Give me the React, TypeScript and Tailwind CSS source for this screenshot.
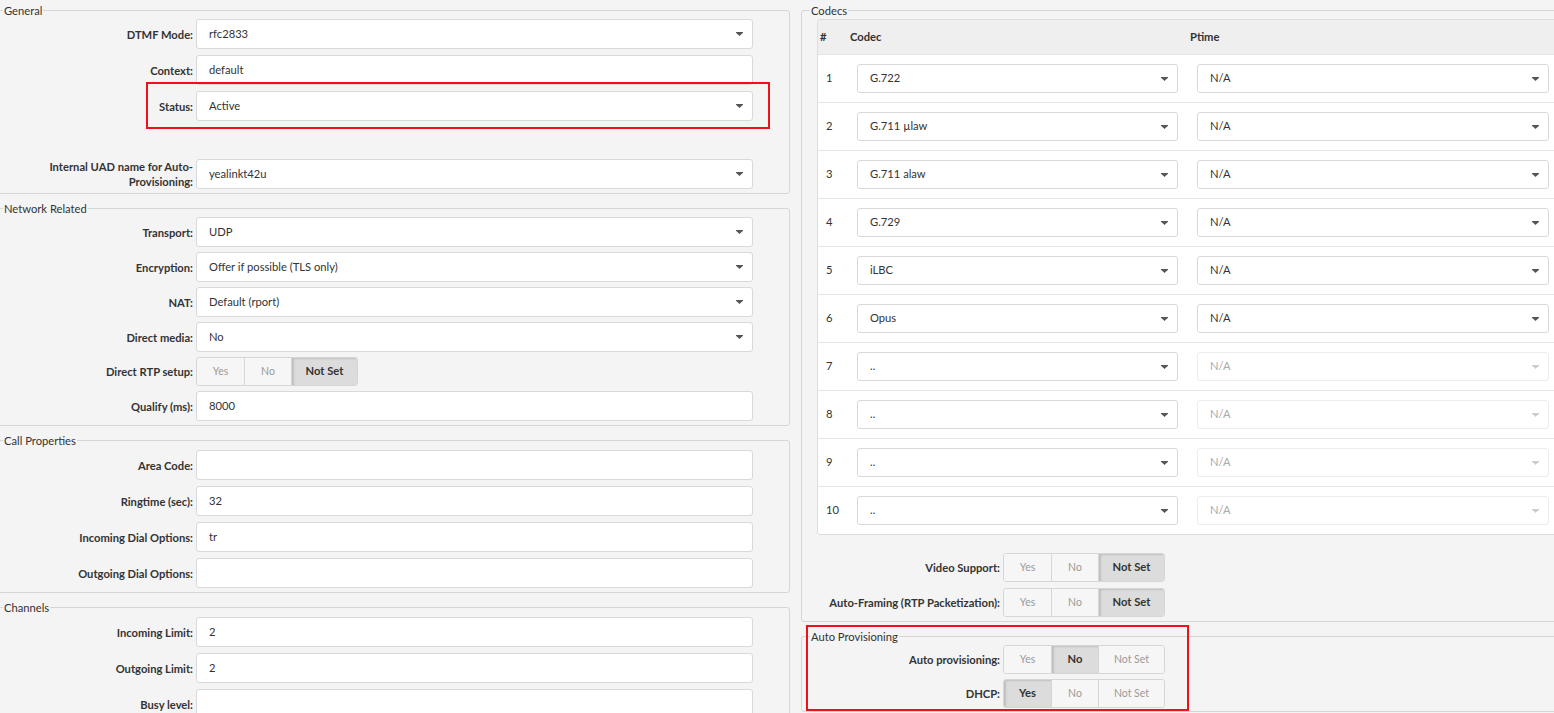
import type { ReactNode } from "react";

const codecs = ["G.722", "G.711 µlaw", "G.711 alaw", "G.729", "iLBC", "Opus", "..", "..", "..", ".."];

function Caret({ light }: { light?: boolean }) {
  return (
    <svg width="7" height="4" viewBox="0 0 7 4" className="shrink-0">
      <path d="M0 0h7v0.8L3.5 4 0 0.8z" fill={light ? "#cccccc" : "#555"} />
    </svg>
  );
}

function Input({ value = "", select, disabled, h = "h-[30px]" }: { value?: string; select?: boolean; disabled?: boolean; h?: string }) {
  return (
    <div
      className={`${h} flex items-center justify-between rounded-[3px] border bg-white pl-[12px] pr-[9px] ${
        disabled ? "border-[#ececec] text-[#aaa]" : "border-[#d9d9d9] text-[#333]"
      }`}
    >
      <span>{value}</span>
      {select && <Caret light={disabled} />}
    </div>
  );
}

function Toggle({ selected }: { selected: number }) {
  const opts = [
    { t: "Yes", w: "w-[47px]" },
    { t: "No", w: "w-[47px]" },
    { t: "Not Set", w: "w-[66px]" },
  ];
  return (
    <div className="flex h-[29px] w-fit overflow-hidden rounded-[3px] border border-[#d6d6d6]">
      {opts.map((o, i) => (
        <div
          key={o.t}
          className={`${o.w} flex items-center justify-center ${i > 0 ? "border-l border-[#d6d6d6]" : ""} ${
            i === selected
              ? "bg-[#dcdcdc] text-[11.2px] font-bold text-[#333] shadow-[inset_2px_1px_2px_rgba(0,0,0,0.13)]"
              : "bg-[#f6f6f6] text-[10.5px] text-[#9a9a9a]"
          }`}
        >
          {o.t}
        </div>
      ))}
    </div>
  );
}

function Row({ label, children, wide = true }: { label: string; children: ReactNode; wide?: boolean }) {
  return (
    <div className="flex items-center">
      <label className="w-[201px] shrink-0 pl-[8px] pr-[3px] text-right font-bold leading-[15px] text-[#333]">{label}</label>
      <div className={wide ? "w-[557px]" : ""}>{children}</div>
    </div>
  );
}

function Fieldset({ legend, children }: { legend: string; children: ReactNode }) {
  return (
    <fieldset className="rounded-[3px] border border-[#d6d6d6]">
      <legend className="ml-[8px] px-[1px] leading-[15px] text-[#333]">{legend}</legend>
      {children}
    </fieldset>
  );
}

export default function App() {
  return (
    <div className="h-[713px] w-full overflow-hidden bg-[#f4f4f4] font-['Lato','Noto_Sans',sans-serif] text-[11.2px] text-[#333]">
      <div className="flex items-start">
        {/* left column */}
        <div className="-ml-[6px] flex w-[796px] shrink-0 flex-col gap-[7px] pt-[3px]">
          <Fieldset legend="General">
            <div className="flex flex-col gap-[6px] pb-[4px] pt-[1px]">
              <Row label="DTMF Mode:"><Input value="rfc2833" select /></Row>
              <Row label="Context:"><Input value="default" /></Row>
              <div className="relative">
                <Row label="Status:"><Input value="Active" select /></Row>
                <div className="pointer-events-none absolute -bottom-[8px] -top-[9px] left-[151px] right-[19px] border-2 border-[#f0101c]" />
              </div>
              <div className="h-[26px]" />
              <Row label="Internal UAD name for Auto-Provisioning:"><Input value="yealinkt42u" select /></Row>
            </div>
          </Fieldset>

          <Fieldset legend="Network Related">
            <div className="flex flex-col gap-[5px] pb-[4px] pt-[1px]">
              <Row label="Transport:"><Input value="UDP" select /></Row>
              <Row label="Encryption:"><Input value="Offer if possible (TLS only)" select /></Row>
              <Row label="NAT:"><Input value="Default (rport)" select /></Row>
              <Row label="Direct media:"><Input value="No" select /></Row>
              <Row label="Direct RTP setup:"><Toggle selected={2} /></Row>
              <Row label="Qualify (ms):"><Input value="8000" /></Row>
            </div>
          </Fieldset>

          <Fieldset legend="Call Properties">
            <div className="flex flex-col gap-[6px] pb-[4px] pt-[2px]">
              <Row label="Area Code:"><Input /></Row>
              <Row label="Ringtime (sec):"><Input value="32" /></Row>
              <Row label="Incoming Dial Options:"><Input value="tr" /></Row>
              <Row label="Outgoing Dial Options:"><Input /></Row>
            </div>
          </Fieldset>

          <Fieldset legend="Channels">
            <div className="flex flex-col gap-[6px] pb-[4px] pt-[2px]">
              <Row label="Incoming Limit:"><Input value="2" /></Row>
              <Row label="Outgoing Limit:"><Input value="2" /></Row>
              <Row label="Busy level:"><Input /></Row>
            </div>
          </Fieldset>
        </div>

        {/* right column */}
        <div className="ml-[11px] flex w-[780px] shrink-0 flex-col gap-[7px] pt-[3px]">
          <Fieldset legend="Codecs">
            <div className="pl-[15px] pt-[1px]">
              <div className="w-[743px] overflow-hidden rounded-[3px] border border-[#dddddd] bg-white">
                <div className="flex h-[34px] items-center bg-[#efefef] font-bold">
                  <div className="w-[30px] pl-[2px]">#</div>
                  <div className="w-[339px] pl-[2px]">Codec</div>
                  <div className="pl-[3px]">Ptime</div>
                </div>
                {codecs.map((c, i) => (
                  <div key={i} className="flex h-[48px] items-center border-t border-[#e4e4e4]">
                    <div className="w-[30px] pl-[8px]">{i + 1}</div>
                    <div className="w-[339px] pl-[9px] pr-[9px]">
                      <Input value={c} select h="h-[29px]" />
                    </div>
                    <div className="flex-1 pl-[10px] pr-[10px]">
                      <Input value="N/A" select disabled={i >= 6} h="h-[29px]" />
                    </div>
                  </div>
                ))}
              </div>
            </div>
            <div className="mt-[18px] flex flex-col gap-[6px] pb-[4px]">
              <Row label="Video Support:" wide={false}><Toggle selected={2} /></Row>
              <Row label="Auto-Framing (RTP Packetization):" wide={false}><Toggle selected={2} /></Row>
            </div>
          </Fieldset>

          <div className="relative">
            <Fieldset legend="Auto Provisioning">
              <div className="flex flex-col gap-[5px] pb-[3px] pt-[1px]">
                <Row label="Auto provisioning:" wide={false}><Toggle selected={1} /></Row>
                <Row label="DHCP:" wide={false}><Toggle selected={0} /></Row>
              </div>
            </Fieldset>
            <div className="pointer-events-none absolute -top-[4px] left-[5px] h-[86px] w-[383px] border-2 border-[#f0101c]" />
          </div>
        </div>
      </div>
    </div>
  );
}
